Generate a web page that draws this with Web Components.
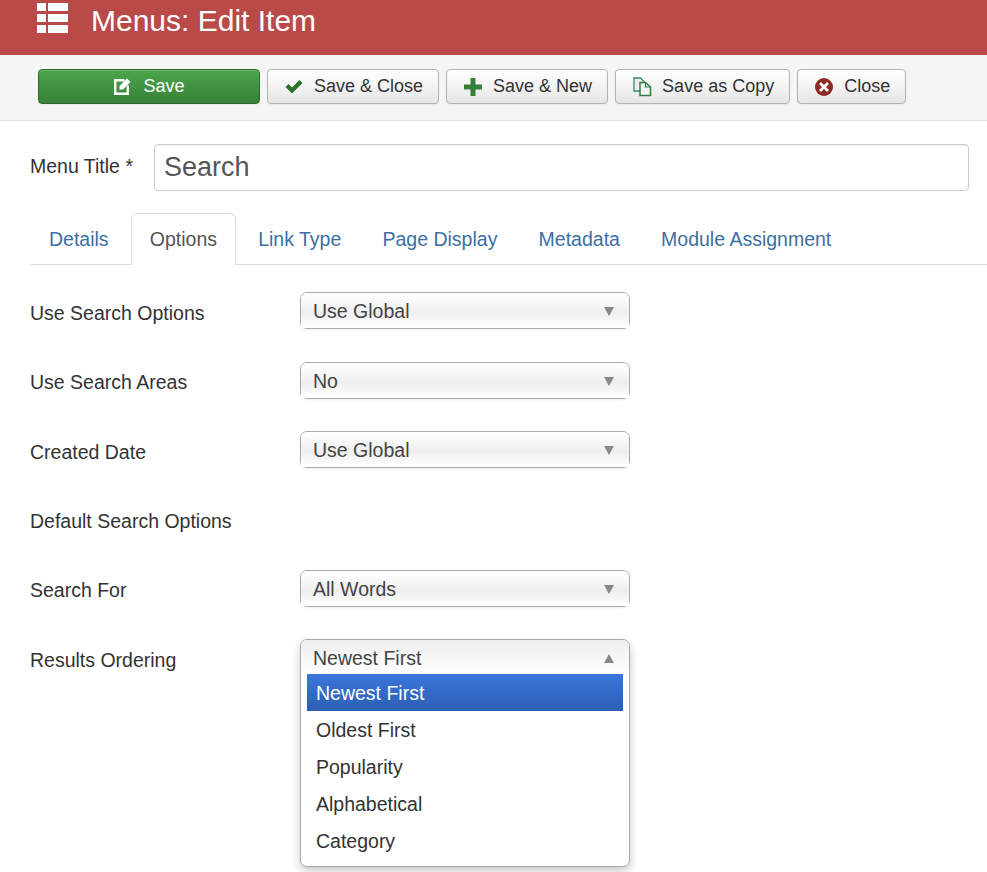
<!DOCTYPE html>
<html>
<head>
<meta charset="utf-8">
<title>Menus: Edit Item</title>
<style>
  html, body { margin: 0; padding: 0; background: #fff; }
  body { font-family: "Liberation Sans", Arial, sans-serif; color: #333; overflow: hidden; height: 872px; }
</style>
</head>
<body>
<title-bar>Menus: Edit Item</title-bar>
<tool-bar>
  <tool-button kind="primary" icon="edit" wide>Save</tool-button>
  <tool-button icon="check">Save &amp; Close</tool-button>
  <tool-button icon="plus">Save &amp; New</tool-button>
  <tool-button icon="copy">Save as Copy</tool-button>
  <tool-button icon="cancel">Close</tool-button>
</tool-bar>
<title-field label="Menu Title *" value="Search"></title-field>
<tab-bar>
  <tab-item>Details</tab-item>
  <tab-item active>Options</tab-item>
  <tab-item>Link Type</tab-item>
  <tab-item>Page Display</tab-item>
  <tab-item>Metadata</tab-item>
  <tab-item>Module Assignment</tab-item>
</tab-bar>
<option-form>
  <form-row label="Use Search Options"><fancy-select value="Use Global"></fancy-select></form-row>
  <form-row label="Use Search Areas"><fancy-select value="No"></fancy-select></form-row>
  <form-row label="Created Date"><fancy-select value="Use Global"></fancy-select></form-row>
  <form-row label="Default Search Options"></form-row>
  <form-row label="Search For"><fancy-select value="All Words"></fancy-select></form-row>
  <form-row label="Results Ordering">
    <fancy-select value="Newest First" open>
      <span>Newest First</span>
      <span>Oldest First</span>
      <span>Popularity</span>
      <span>Alphabetical</span>
      <span>Category</span>
    </fancy-select>
  </form-row>
</option-form>

<script>
// icons for the toolbar buttons
const ICONS = {
  edit: `<svg width="19" height="19" viewBox="0 0 19 19">
    <path d="M11.500 3.200H2.200V16.800H14.800V8.500" fill="none" stroke="#fff" stroke-width="2.400"/>
    <path d="M6.500 9 14 1.500 17.500 5 10 12.500H6.500z" fill="#fff"/></svg>`,
  check: `<svg width="18" height="15" viewBox="0 0 18 15">
    <path d="M0.500 8 3.500 5 7 8.500 14.500 1 17.500 4 7 14.500z" fill="#2f6f30"/></svg>`,
  plus: `<svg width="18" height="18" viewBox="0 0 18 18">
    <path d="M6.500 0h5v6.500H18v5h-6.500V18h-5v-6.500H0v-5h6.500z" fill="#378137"/></svg>`,
  copy: `<svg width="19" height="20" viewBox="0 0 19 20" style="margin-right:-1px">
    <path d="M1 1h6.500L11 4.500V14H1z" fill="#eee" stroke="#3c8a6c" stroke-width="1.300"/>
    <path d="M7 5.500h5.500l5 4.500v8.500H7z" fill="#f4f4f4" stroke="#2f7d3f" stroke-width="1.500"/>
    <path d="M12.500 5.500v4.500h5" fill="none" stroke="#2f7d3f" stroke-width="1.200"/></svg>`,
  cancel: `<svg width="18" height="18" viewBox="0 0 18 18">
    <circle cx="9" cy="9" r="9" fill="#8e2a26"/>
    <path d="M6 6l6 6M12 6l-6 6" stroke="#fff" stroke-width="2.800" stroke-linecap="square"/></svg>`
};

class TitleBar extends HTMLElement {
  constructor() {
    super();
    this.attachShadow({ mode: 'open' });
    this.shadowRoot.innerHTML = `
      <style>
        :host { display: flex; align-items: flex-start; height: 55px; background: #b94a48; color: #fff; padding-left: 37px; box-sizing: border-box; }
        svg { display: block; margin-top: 3px; }
        h1 { margin: 0 0 0 23px; font: 400 30px/41px "Liberation Sans", Arial, sans-serif; }
      </style>
      <svg width="31" height="30" viewBox="0 0 31 30" fill="#fff">
        <rect x="0" y="0" width="9" height="8"/><rect x="11" y="0" width="20" height="8"/>
        <rect x="0" y="11" width="9" height="8"/><rect x="11" y="11" width="20" height="8"/>
        <rect x="0" y="22" width="9" height="8"/><rect x="11" y="22" width="20" height="8"/>
      </svg>
      <h1><slot></slot></h1>`;
  }
}
customElements.define('title-bar', TitleBar);

class ToolBar extends HTMLElement {
  constructor() {
    super();
    this.attachShadow({ mode: 'open' });
    this.shadowRoot.innerHTML = `
      <style>
        :host { display: flex; gap: 7px; height: 66px; box-sizing: border-box; padding: 14px 0 0 38px; background: #f5f5f5; border-bottom: 1px solid #e1e1e1; }
      </style>
      <slot></slot>`;
  }
}
customElements.define('tool-bar', ToolBar);

class ToolButton extends HTMLElement {
  constructor() {
    super();
    this.attachShadow({ mode: 'open' });
    this.shadowRoot.innerHTML = `
      <style>
        :host { display: flex; align-items: center; justify-content: center; gap: 11px; box-sizing: border-box; height: 35px; padding: 0 15px 0 17px; font-size: 18px; color: #333; border: 1px solid #b3b3b3; border-radius: 4px; background: linear-gradient(#fff, #e6e6e6); box-shadow: inset 0 1px 0 rgba(255,255,255,.2), 0 1px 2px rgba(0,0,0,.05); }
        :host([kind=primary]) { color: #fff; border-color: #2c6a2c; background: linear-gradient(#4ca64c, #378137); width: 222px; padding: 0; }
        span { display: flex; }
      </style>
      <span id="icon"></span><slot></slot>`;
  }
  connectedCallback() {
    this.shadowRoot.getElementById('icon').innerHTML = ICONS[this.getAttribute('icon')] || '';
  }
}
customElements.define('tool-button', ToolButton);

class TitleField extends HTMLElement {
  constructor() {
    super();
    this.attachShadow({ mode: 'open' });
    this.shadowRoot.innerHTML = `
      <style>
        :host { display: flex; align-items: center; height: 47px; margin: 23px 18px 0 30px; font-size: 19.500px; color: #333; }
        label { width: 124px; flex: none; padding-bottom: 2px; }
        input { flex: 1; min-width: 0; height: 47px; box-sizing: border-box; padding: 0 9px; font: 27px "Liberation Sans", Arial, sans-serif; color: #555; border: 1px solid #ccc; border-radius: 4px; background: #fff; box-shadow: inset 0 1px 1px rgba(0,0,0,.075); outline: none; }
      </style>
      <label></label><input type="text">`;
  }
  connectedCallback() {
    this.shadowRoot.querySelector('label').textContent = this.getAttribute('label');
    this.shadowRoot.querySelector('input').setAttribute('value', this.getAttribute('value'));
  }
}
customElements.define('title-field', TitleField);

class TabBar extends HTMLElement {
  constructor() {
    super();
    this.attachShadow({ mode: 'open' });
    this.shadowRoot.innerHTML = `
      <style>
        :host { display: flex; height: 51px; margin: 22px 0 0 30px; border-bottom: 1px solid #ddd; }
      </style>
      <slot></slot>`;
  }
}
customElements.define('tab-bar', TabBar);

class TabItem extends HTMLElement {
  constructor() {
    super();
    this.attachShadow({ mode: 'open' });
    this.shadowRoot.innerHTML = `
      <style>
        :host { display: block; height: 51px; box-sizing: border-box; padding: 0 18.100px; margin-right: 3px; line-height: 51px; font-size: 19.500px; color: #3b6fa5; border: 1px solid transparent; border-bottom: 0; border-radius: 6px 6px 0 0; }
        :host(:first-child) { padding-left: 18px; }
        :host([active]) { height: 52px; background: #fff; color: #555; border-color: #ddd; }
      </style>
      <slot></slot>`;
  }
}
customElements.define('tab-item', TabItem);

class OptionForm extends HTMLElement {
  constructor() {
    super();
    this.attachShadow({ mode: 'open' });
    this.shadowRoot.innerHTML = `
      <style>
        :host { display: grid; grid-auto-rows: 69.400px; margin: 27.400px 0 0 30px; }
      </style>
      <slot></slot>`;
  }
}
customElements.define('option-form', OptionForm);

class FormRow extends HTMLElement {
  constructor() {
    super();
    this.attachShadow({ mode: 'open' });
    this.shadowRoot.innerHTML = `
      <style>
        :host { display: flex; align-items: flex-start; font-size: 19.500px; color: #333; }
        label { width: 270px; flex: none; line-height: 23px; padding-top: 9.400px; }
      </style>
      <label></label><slot></slot>`;
  }
  connectedCallback() {
    this.shadowRoot.querySelector('label').textContent = this.getAttribute('label');
  }
}
customElements.define('form-row', FormRow);

class FancySelect extends HTMLElement {
  constructor() {
    super();
    this.attachShadow({ mode: 'open' });
    this.shadowRoot.innerHTML = `
      <style>
        :host { display: block; position: relative; width: 330px; height: 37px; font-size: 19.500px; color: #444; }
        .box { position: absolute; left: 0; top: 0; right: 0; box-sizing: border-box; border: 1px solid #aaa; border-radius: 7px; background: #fff; box-shadow: 0 1px 3px rgba(0,0,0,.08); }
        .head { display: flex; align-items: center; justify-content: space-between; box-sizing: border-box; height: 35px; padding: 1.600px 15px 0 12px; border-radius: 6px 6px 0 0; background: linear-gradient(#fff 0, #f4f4f4 40%, #eee 55%, #fff 100%); }
        .arrow { width: 0; height: 0; border-left: 5px solid transparent; border-right: 5px solid transparent; border-top: 9px solid #888; }
        .menu { display: none; padding: 0 6px 7px; }
        :host([open]) .box { box-shadow: 0 4px 10px rgba(0,0,0,.22); z-index: 2; }
        :host([open]) .head { height: 34px; padding: 2px 15px 0 12px; background: linear-gradient(#eee, #fff); }
        :host([open]) .arrow { border-top: 0; border-bottom: 9px solid #888; }
        :host([open]) .menu { display: block; }
        ::slotted(span) { display: block; height: 37px; line-height: 39px; padding-left: 9px; color: #333; }
        ::slotted(span:first-child) { color: #fff; background: linear-gradient(#3b76dc, #2a5fb4); }
      </style>
      <div class="box">
        <div class="head"><span id="value"></span><i class="arrow"></i></div>
        <div class="menu"><slot></slot></div>
      </div>`;
  }
  connectedCallback() {
    this.shadowRoot.getElementById('value').textContent = this.getAttribute('value');
  }
}
customElements.define('fancy-select', FancySelect);
</script>
</body>
</html>
